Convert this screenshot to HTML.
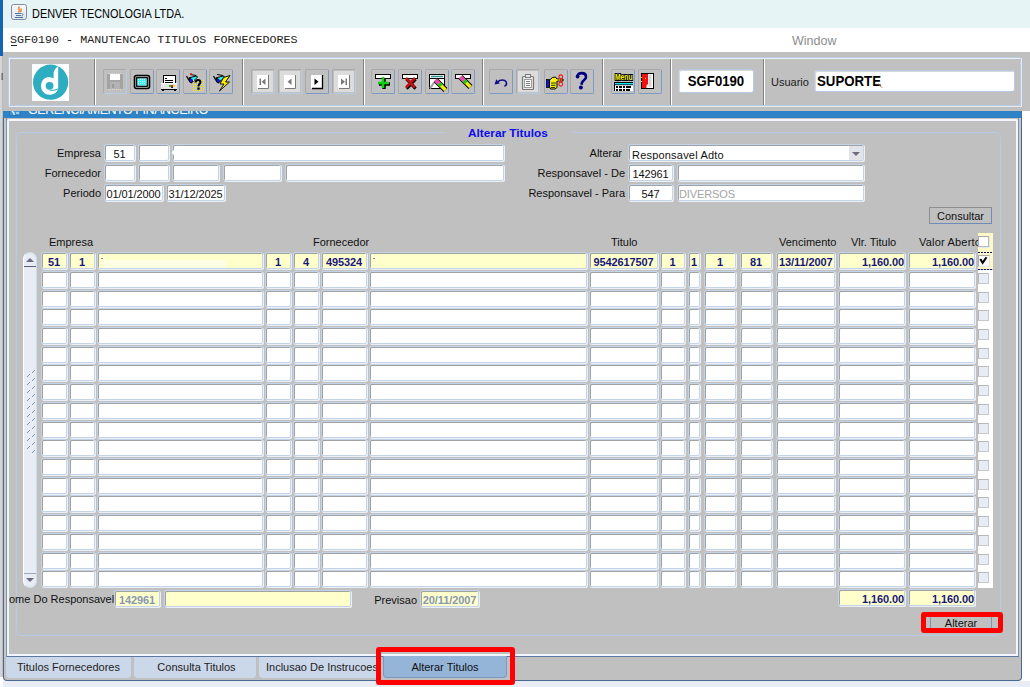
<!DOCTYPE html><html><head><meta charset="utf-8"><style>
*{margin:0;padding:0;box-sizing:border-box}
html,body{width:1030px;height:687px;overflow:hidden;background:#fff;font-family:"Liberation Sans",sans-serif}
body{position:relative}
.a{position:absolute}
.f{position:absolute;border:1px solid #c3d3e8;border-radius:2px;box-shadow:inset 1px 1px 0 #a2a2a2,1px 1px 0 #eceff5;overflow:hidden}
.f span{display:block;white-space:nowrap;overflow:hidden;letter-spacing:-0.1px}
.l{position:absolute;white-space:nowrap;line-height:13px;letter-spacing:0}
.tb{position:absolute;top:69px;width:24px;height:25px;border:1px solid #a9a9a9;border-right-color:#7d9bc2;border-bottom-color:#7d9bc2;border-radius:2px}
.tb.d{border-right-color:#b8cce6;border-bottom-color:#b8cce6}
.tb svg{position:absolute;left:-1px;top:-1px}
.sep{position:absolute;top:59px;width:2px;height:46px;border-left:1px solid #808080;border-right:1px solid #fff}
.tab{position:absolute;top:657px;height:21px;background:#cbd8ea;border-radius:0 0 4px 4px;font-size:11px;color:#222;text-align:center;line-height:20px;white-space:nowrap;overflow:hidden}
</style></head><body>

<div class="a" style="left:0;top:0;width:3px;height:56px;background:#1565b5"></div>
<div class="a" style="left:0;top:56px;width:2px;height:621px;background:#d4d4d4"></div>
<div class="a" style="left:2px;top:56px;width:1px;height:621px;background:#bcbcbc"></div>
<div class="a" style="left:3px;top:0;width:1027px;height:28px;background:#e6f4f6"></div>
<div class="a" style="left:1px;top:73px;width:1px;height:7px;background:#a0a0a0"></div><div class="a" style="left:2px;top:73px;width:1px;height:7px;background:#707070"></div>
<svg class="a" style="left:11px;top:4px" width="16" height="16" viewBox="0 0 16 16">
<defs><linearGradient id="jg" x1="0" y1="0" x2="0" y2="1"><stop offset="0" stop-color="#fafafa"/><stop offset="1" stop-color="#dde3ea"/></linearGradient></defs>
<rect x="0.5" y="0.5" width="15" height="15" rx="2" fill="url(#jg)" stroke="#7a8ea8"/>
<path d="M8.5 2.5c-2.5 2 1.5 3.5-1 6M10.5 4.5c-1.5 1 .5 2-1 3.5" stroke="#e8731c" stroke-width="1.3" fill="none"/>
<path d="M4 9.5h6M5 11.5h5M4 13.5h8M10.5 9.5c2 0 2 2 0 2.5" stroke="#4f77a4" stroke-width="1" fill="none"/>
</svg>
<div class="l" style="left:32px;top:6.5px;font-size:12.2px;line-height:14px;color:#000;letter-spacing:0;transform:scaleX(0.895);transform-origin:0 0">DENVER TECNOLOGIA LTDA.</div>
<div class="a" style="left:3px;top:28px;width:1027px;height:24px;background:#fff"></div>
<div class="l" style="left:10px;top:33px;font-family:'Liberation Mono',monospace;font-size:11.7px;line-height:14px;color:#222;letter-spacing:0">SGF0190 - MANUTENCAO TITULOS FORNECEDORES</div>
<div class="a" style="left:11px;top:45px;width:6px;height:1px;background:#222"></div>
<div class="l" style="left:792px;top:34px;font-size:12.5px;line-height:14px;color:#8c8c8c;letter-spacing:0">Window</div>
<div class="a" style="left:3px;top:52px;width:1027px;height:59px;background:#c0c0c0"></div>
<div class="a" style="left:8px;top:57px;width:1013px;height:49px;border:1px solid #b9cce4;box-shadow:inset 1px 1px 0 #eaf0f8, 1px 1px 0 #e4eaf2"></div>
<div class="a" style="left:32px;top:64px;width:37px;height:37px;background:#fff"></div>
<svg class="a" style="left:32px;top:64px" width="37" height="37" viewBox="0 0 37 37">
<circle cx="18.6" cy="18.2" r="17.6" fill="#2eadc2"/>
<path d="M26.2 2.2 C24 3.8 21.6 6 21.6 9.5 L21.6 14.6 C19.8 13.4 17.6 13 15.5 13.3 C11.5 14 9 17.8 9 22 C9 27 13 30.8 17.6 30.8 C21.6 30.8 25.2 28.5 26.2 24.8 Z" fill="#fff"/>
<circle cx="17.6" cy="21.8" r="3.9" fill="#2eadc2"/>
<path d="M17.6 25.7 C20 26.2 23 25.8 26.2 24.2 L26.2 25.2 C23 27 20 27.2 17.6 26.6 Z" fill="#2eadc2"/>
</svg>
<div class="sep" style="left:94px"></div>
<div class="sep" style="left:242px"></div>
<div class="sep" style="left:363px"></div>
<div class="sep" style="left:482px"></div>
<div class="sep" style="left:602px"></div>
<div class="sep" style="left:670px"></div>
<div class="sep" style="left:763px"></div>
<div class="tb d" style="left:103px"><svg width="24" height="25" viewBox="0 0 24 25"><path d="M4 5h15l1 1v14H4z" fill="#a4a4a4"/><rect x="7" y="5" width="10" height="6" fill="#fff"/><path d="M5 4.5h14" stroke="#d8d8d8" stroke-dasharray="1 1"/><rect x="7" y="13" width="10" height="7" fill="#b4b4b4"/><rect x="9" y="15" width="2" height="4" fill="#9a9a9a"/><path d="M5 20.5h14" stroke="#d8d8d8" stroke-dasharray="1 1"/></svg></div>
<div class="tb" style="left:130px"><svg width="24" height="25" viewBox="0 0 24 25"><rect x="4.5" y="6.5" width="15" height="13" rx="2" fill="#c0c0c0" stroke="#000" stroke-width="1.6"/><rect x="6.8" y="8.8" width="10.4" height="8.4" fill="#fff" stroke="#000" stroke-width="1.4"/><rect x="7.5" y="9.5" width="9" height="7" fill="#40f0f8"/><path d="M8 10.5h8M8 12.5h8M8 14.5h8" stroke="#d8f8f8" stroke-dasharray="1 1"/></svg></div>
<div class="tb" style="left:156px"><svg width="24" height="25" viewBox="0 0 24 25"><rect x="7.5" y="6.5" width="12" height="8" fill="#fff" stroke="#000"/><path d="M9 9.5h2M9 11.5h8M9 13.5h8" stroke="#000"/><rect x="5" y="14" width="16" height="6" fill="#e4e4e4"/><path d="M5 14.5h16" stroke="#fff"/><path d="M5 20.5h16" stroke="#000"/><rect x="13" y="16" width="2" height="2" fill="#18c818"/><rect x="15" y="16" width="2" height="2" fill="#e81818"/><rect x="17" y="16" width="2" height="2" fill="#f0f018"/><rect x="15" y="18" width="2" height="1" fill="#1818e8"/><path d="M6 21.5h2M18 21.5h2" stroke="#000"/></svg></div>
<div class="tb" style="left:183px"><svg width="24" height="25" viewBox="0 0 24 25"><path d="M3.5 7l2.5 4.5" stroke="#000" stroke-width="1.2"/><path d="M5.5 8.5L13.5 6.5L15 8L8.5 14.5L6 13z" fill="#000"/><path d="M7.5 9L13.2 7.4L14 8.2L10.5 11.5z" fill="#30f0f8"/><path d="M6.8 9.5L10.5 11.5L8.3 13.6L6.8 12.6z" fill="#1414f0"/><path d="M7 5.5l6 1" stroke="#000" stroke-width="1"/><circle cx="8" cy="5" r="1" fill="#f01818"/><rect x="10" y="11" width="1" height="1" fill="#f0f000"/><rect x="10" y="13" width="1" height="1" fill="#f0f000"/><rect x="10" y="15" width="1" height="1" fill="#f0f000"/><rect x="10" y="17" width="1" height="1" fill="#f0f000"/><rect x="10" y="19" width="1" height="1" fill="#f0f000"/><rect x="10" y="21" width="1" height="1" fill="#f0f000"/><rect x="12" y="11" width="1" height="1" fill="#f0f000"/><rect x="12" y="13" width="1" height="1" fill="#f0f000"/><rect x="12" y="15" width="1" height="1" fill="#f0f000"/><rect x="12" y="17" width="1" height="1" fill="#f0f000"/><rect x="12" y="19" width="1" height="1" fill="#f0f000"/><rect x="12" y="21" width="1" height="1" fill="#f0f000"/><rect x="14" y="11" width="1" height="1" fill="#f0f000"/><rect x="14" y="13" width="1" height="1" fill="#f0f000"/><rect x="14" y="15" width="1" height="1" fill="#f0f000"/><rect x="14" y="17" width="1" height="1" fill="#f0f000"/><rect x="14" y="19" width="1" height="1" fill="#f0f000"/><rect x="14" y="21" width="1" height="1" fill="#f0f000"/><rect x="16" y="11" width="1" height="1" fill="#f0f000"/><rect x="16" y="13" width="1" height="1" fill="#f0f000"/><rect x="16" y="15" width="1" height="1" fill="#f0f000"/><rect x="16" y="17" width="1" height="1" fill="#f0f000"/><rect x="16" y="19" width="1" height="1" fill="#f0f000"/><rect x="16" y="21" width="1" height="1" fill="#f0f000"/><rect x="18" y="11" width="1" height="1" fill="#f0f000"/><rect x="18" y="13" width="1" height="1" fill="#f0f000"/><rect x="18" y="15" width="1" height="1" fill="#f0f000"/><rect x="18" y="17" width="1" height="1" fill="#f0f000"/><rect x="18" y="19" width="1" height="1" fill="#f0f000"/><rect x="18" y="21" width="1" height="1" fill="#f0f000"/><rect x="20" y="11" width="1" height="1" fill="#f0f000"/><rect x="20" y="13" width="1" height="1" fill="#f0f000"/><rect x="20" y="15" width="1" height="1" fill="#f0f000"/><rect x="20" y="17" width="1" height="1" fill="#f0f000"/><rect x="20" y="19" width="1" height="1" fill="#f0f000"/><rect x="20" y="21" width="1" height="1" fill="#f0f000"/><path d="M12.6 13.6c0-2 1.2-2.6 2.4-2.6 1.4 0 2.4.9 2.4 2.2 0 1.6-1.9 2-1.9 3.6v.6" stroke="#000" stroke-width="2" fill="none"/><rect x="14.3" y="18.5" width="2.4" height="2.2" fill="#000"/></svg></div>
<div class="tb" style="left:209px"><svg width="24" height="25" viewBox="0 0 24 25"><g transform="translate(1,0)"><path d="M3.5 7l2.5 4.5" stroke="#000" stroke-width="1.2"/><path d="M5.5 8.5L13.5 6.5L15 8L8.5 14.5L6 13z" fill="#000"/><path d="M7.5 9L13.2 7.4L14 8.2L10.5 11.5z" fill="#30f0f8"/><path d="M6.8 9.5L10.5 11.5L8.3 13.6L6.8 12.6z" fill="#1414f0"/><path d="M7 5.5l6 1" stroke="#000" stroke-width="1"/></g><path d="M21 6.5l-6.5 2-3.5 6.5h4l-4.5 7 10-9h-4l4.5-6.5z" fill="#f8f000" stroke="#000" stroke-width="0.9" stroke-linejoin="round"/></svg></div>
<div class="tb d" style="left:251px"><div style="position:absolute;left:1px;top:1px;width:20px;height:21px;background:#dcdcdc"></div><svg width="24" height="25" viewBox="0 0 24 25"><rect x="6" y="6" width="11.5" height="13.5" fill="#fff"/><path d="M17.5 6v13.5H7" stroke="#7a7a7a" fill="none" stroke-width="1"/><rect x="8.5" y="9.5" width="1.5" height="6.5" fill="#7a7a7a"/><path d="M14.5 9.5v6.5l-4-3.25z" fill="#7a7a7a"/></svg></div>
<div class="tb d" style="left:278px"><div style="position:absolute;left:1px;top:1px;width:20px;height:21px;background:#dcdcdc"></div><svg width="24" height="25" viewBox="0 0 24 25"><rect x="6" y="6" width="11.5" height="13.5" fill="#fff"/><path d="M17.5 6v13.5H7" stroke="#7a7a7a" fill="none" stroke-width="1"/><path d="M13.5 9.5v6.5l-4-3.25z" fill="#7a7a7a"/></svg></div>
<div class="tb" style="left:305px"><svg width="24" height="25" viewBox="0 0 24 25"><rect x="6" y="6" width="11.5" height="13.5" fill="#fff"/><path d="M17.5 6v13.5H7" stroke="#000" fill="none" stroke-width="1.3"/><path d="M9.5 9.5v6.5l4-3.25z" fill="#000"/></svg></div>
<div class="tb d" style="left:332px"><div style="position:absolute;left:1px;top:1px;width:20px;height:21px;background:#dcdcdc"></div><svg width="24" height="25" viewBox="0 0 24 25"><rect x="6" y="6" width="11.5" height="13.5" fill="#fff"/><path d="M17.5 6v13.5H7" stroke="#7a7a7a" fill="none" stroke-width="1"/><path d="M9 9.5v6.5l4-3.25z" fill="#7a7a7a"/><rect x="13.5" y="9.5" width="1.5" height="6.5" fill="#7a7a7a"/></svg></div>
<div class="tb" style="left:371px"><svg width="24" height="25" viewBox="0 0 24 25"><rect x="4.5" y="5.5" width="15" height="4" fill="#fff" stroke="#000"/><path d="M13 9v11M8 15h11" stroke="#000" stroke-width="3.5"/><path d="M12 8v11M7 14h11" stroke="#10d010" stroke-width="2.6"/></svg></div>
<div class="tb" style="left:398px"><svg width="24" height="25" viewBox="0 0 24 25"><rect x="4.5" y="5.5" width="15" height="4" fill="#fff" stroke="#000"/><path d="M8 9.5l9 9.5M17 9.5l-9 9.5" stroke="#000" stroke-width="3" transform="translate(0.6,0.6)"/><path d="M8 9l9 9.5M17 9l-9 9.5" stroke="#c01010" stroke-width="2.6"/></svg></div>
<div class="tb" style="left:425px"><svg width="24" height="25" viewBox="0 0 24 25"><rect x="4.5" y="5.5" width="15" height="14" fill="#fff" stroke="#000"/><path d="M6 7.5h12" stroke="#2a9090" stroke-width="1.5"/><path d="M5 9.5h14" stroke="#000"/><path d="M5 19.5l4-6" stroke="#a0a0a0" stroke-width="2"/><g transform="translate(10.5,11)"><path d="M0 0l10 10" stroke="#000" stroke-width="5.5"/><path d="M0 0l10 10" stroke="#f0e818" stroke-width="3.6"/><path d="M0 0l3.5 3.5" stroke="#f040c0" stroke-width="3.6"/><path d="M3.5 3.5l2.2 2.2" stroke="#18c818" stroke-width="3.6"/></g></svg></div>
<div class="tb" style="left:451px"><svg width="24" height="25" viewBox="0 0 24 25"><rect x="4.5" y="5.5" width="15" height="4" fill="#fff" stroke="#000"/><g transform="translate(9.5,8)"><path d="M0 0l10 10" stroke="#000" stroke-width="5.5"/><path d="M0 0l10 10" stroke="#f0e818" stroke-width="3.6"/><path d="M0 0l3.5 3.5" stroke="#f040c0" stroke-width="3.6"/><path d="M3.5 3.5l2.2 2.2" stroke="#18c818" stroke-width="3.6"/></g></svg></div>
<div class="tb" style="left:489px"><svg width="24" height="25" viewBox="0 0 24 25"><path d="M8.5 13c2.5-2.5 7.5-2.8 8.8.2.7 1.8-.4 3.4-1.8 4" stroke="#10108a" stroke-width="1.5" fill="none"/><path d="M5.5 15.5l1.8-5.2 3.6 4.2z" fill="#10108a"/></svg></div>
<div class="tb d" style="left:516px"><div style="position:absolute;left:1px;top:1px;width:20px;height:21px;background:#dcdcdc"></div><svg width="24" height="25" viewBox="0 0 24 25"><rect x="6.5" y="7.5" width="11" height="13" rx="1" fill="#e8e8e8" stroke="#7a7a7a" stroke-width="1.2"/><rect x="9.5" y="5.5" width="5" height="3" fill="#e8e8e8" stroke="#7a7a7a"/><rect x="8.5" y="10.5" width="7" height="8" fill="#fff" stroke="#9a9a9a"/><path d="M10 12.5h4M10 14.5h4M10 16.5h4" stroke="#7a7a7a"/></svg></div>
<div class="tb" style="left:544px"><svg width="24" height="25" viewBox="0 0 24 25"><rect x="2.5" y="10.5" width="3" height="8" fill="#1010f0" stroke="#000" stroke-width="0.8"/><path d="M5.5 11l3-2.5 3-.5 1.5 2h6v2h-6v6.5l-2 1.5h-4.5l-1-2z" fill="#f4f020" stroke="#000" stroke-width="1"/><path d="M7 14h5M7 16.3h4.5M7 18.5h4" stroke="#000" stroke-width="0.8"/><path d="M13 11h6" stroke="#f4f020" stroke-width="0.8" stroke-dasharray="1 1"/><circle cx="16.8" cy="7.8" r="1.9" fill="none" stroke="#f01818" stroke-width="1.1"/><circle cx="16.8" cy="15.2" r="1.9" fill="none" stroke="#f01818" stroke-width="1.1"/><path d="M16.3 9.6l1.6 3.6M17.3 9.6l-1.6 3.6" stroke="#f01818" stroke-width="0.9"/></svg></div>
<div class="tb" style="left:570px"><svg width="24" height="25" viewBox="0 0 24 25"><path d="M7.2 7.5c.6-2.3 2.4-3.4 4.6-3.4 2.5 0 4.2 1.6 4.2 3.8 0 2.6-3.3 3.4-4.2 6.2l-.3 1.6" stroke="#000080" stroke-width="2.6" fill="none"/><circle cx="7.6" cy="7.6" r="1.9" fill="#000080"/><circle cx="10.9" cy="18.4" r="2" fill="#000080"/></svg></div>
<div class="tb" style="left:611px"><svg width="24" height="25" viewBox="0 0 24 25"><text x="4" y="11" font-family="Liberation Sans" font-weight="bold" font-size="9.5" fill="#f8f818" stroke="#000" stroke-width="2.2" paint-order="stroke" textLength="17.5" lengthAdjust="spacingAndGlyphs">Menu</text><rect x="3" y="13" width="19" height="9" fill="#000"/><rect x="4" y="14" width="18" height="1.4" fill="#18e8f0"/><rect x="4" y="16.2" width="18" height="5.8" fill="#fff"/><path d="M5 18h2M8 18h3M12 18h2M15 18h5M5 21h2M8 21h3M12 21h2M15 21h4" stroke="#000" stroke-width="2"/></svg></div>
<div class="tb" style="left:638px"><svg width="24" height="25" viewBox="0 0 24 25"><rect x="3.5" y="4.5" width="12" height="15" fill="#fff" stroke="#000"/><rect x="10.5" y="6" width="3" height="12" fill="#d8d8d8"/><path d="M4 5h6v10l-1.5 1.5V19H4z" fill="#f01010"/><rect x="7" y="9" width="1" height="1" fill="#f0f000"/><rect x="3" y="8" width="1" height="1" fill="#f0f000"/><rect x="3" y="12" width="1" height="1" fill="#f0f000"/></svg></div>
<div class="a" style="left:678px;top:69px;width:76px;height:24px;background:#fff;border:1px solid #b7c9e3;border-radius:3px;box-shadow:inset 1px 1px 0 #d8d8d8"></div>
<div class="l" style="left:678px;width:76px;text-align:center;top:73px;font-size:14px;line-height:16px;font-weight:bold;color:#000;letter-spacing:0;transform:scaleX(0.94)">SGF0190</div>
<div class="l" style="left:771px;top:76px;font-size:11px;color:#1a1a1a">Usuario</div>
<div class="a" style="left:814px;top:70px;width:201px;height:22px;background:#fff;border:1px solid #b7c9e3;border-radius:3px;box-shadow:inset 1px 1px 0 #d8d8d8"></div>
<div class="l" style="left:817px;top:73px;font-size:14px;line-height:16px;font-weight:bold;color:#000;letter-spacing:0;transform:scaleX(0.945);transform-origin:0 0">SUPORTE</div>
<svg class="a" style="left:878px;top:83px" width="5" height="5"><path d="M0.5 0.5q1 3 4 4" stroke="#c87040" stroke-width="0.8" fill="none"/></svg>
<div class="a" style="left:3px;top:111px;width:1019px;height:570px;background:#c0c0c0;border:1px solid #4a6894;border-top:none;border-radius:0 0 4px 4px"></div>
<div class="a" style="left:3px;top:111px;width:1018px;height:7px;background:#2e82c6;overflow:hidden"><div style="position:absolute;left:6px;top:-6px;width:12px;height:11px;background:#3a96d8;border:1px solid #2a78b8"></div><svg style="position:absolute;left:8px;top:0" width="9" height="4"><path d="M1 0l2 2v2M5 2h3" stroke="#fff" stroke-width="1.2" fill="none"/></svg><div style="position:absolute;left:25px;top:-7px;font-size:12.5px;line-height:13px;color:#fff;white-space:nowrap;letter-spacing:-0.45px">GERENCIAMENTO FINANCEIRO</div></div>
<div class="a" style="left:4px;top:118px;width:2px;height:539px;background:#cbc8c4"></div><div class="a" style="left:1019px;top:118px;width:2px;height:539px;background:#cbc8c4"></div>
<div class="a" style="left:6px;top:118px;width:1013px;height:539px;background:#c0c0c0;border-left:1px solid #7894b4;border-right:1px solid #7894b4;border-bottom:1px solid #5a78a0"></div>
<div class="a" style="left:7px;top:119px;width:1011px;height:537px;border-left:2px solid #f2f5fb;border-top:2px solid #f2f5fb;border-right:2px solid #f2f5fb;border-bottom:2px solid #f2f5fb;border-radius:2px 2px 0 0"></div>
<div class="a" style="left:16px;top:132px;width:985px;height:504px;border:1px solid #b7cbe6;border-radius:5px"></div>
<div class="a" style="left:445px;top:128px;width:128px;height:8px;background:#c0c0c0"></div>
<div class="l" style="left:468px;top:127px;font-size:11.8px;font-weight:bold;color:#0c0cf0;letter-spacing:0">Alterar Titulos</div>
<div class="l" style="right:929px;top:147px;font-size:11px;color:#111;font-weight:normal;">Empresa</div>
<div class="l" style="right:929px;top:167px;font-size:11px;color:#111;font-weight:normal;">Fornecedor</div>
<div class="l" style="right:929px;top:187px;font-size:11px;color:#111;font-weight:normal;">Periodo</div>
<div class="f" style="left:104px;top:144px;width:31px;height:17px;background:#fff;"><span style="text-align:center;color:#111;font-weight:normal;font-size:11px;padding:1px 2px 0;line-height:16px;">51</span></div>
<div class="f" style="left:138px;top:144px;width:31px;height:17px;background:#fff;"><span style="text-align:center;color:#111;font-weight:normal;font-size:11px;padding:1px 2px 0;line-height:16px;"></span></div>
<div class="f" style="left:172px;top:144px;width:332px;height:17px;background:#fff;"><span style="text-align:center;color:#111;font-weight:normal;font-size:11px;padding:1px 2px 0;line-height:16px;"></span></div>
<svg class="a" style="left:171px;top:144px" width="7" height="17"><path d="M6 1.5L0.8 8.5L6 15.5Z" fill="#fff"/></svg>
<div class="f" style="left:104px;top:164px;width:31px;height:17px;background:#fff;"><span style="text-align:center;color:#111;font-weight:normal;font-size:11px;padding:1px 2px 0;line-height:16px;"></span></div>
<div class="f" style="left:138px;top:164px;width:31px;height:17px;background:#fff;"><span style="text-align:center;color:#111;font-weight:normal;font-size:11px;padding:1px 2px 0;line-height:16px;"></span></div>
<div class="f" style="left:172px;top:164px;width:47px;height:17px;background:#fff;"><span style="text-align:center;color:#111;font-weight:normal;font-size:11px;padding:1px 2px 0;line-height:16px;"></span></div>
<div class="f" style="left:223px;top:164px;width:58px;height:17px;background:#fff;"><span style="text-align:center;color:#111;font-weight:normal;font-size:11px;padding:1px 2px 0;line-height:16px;"></span></div>
<div class="f" style="left:285px;top:164px;width:219px;height:17px;background:#fff;"><span style="text-align:center;color:#111;font-weight:normal;font-size:11px;padding:1px 2px 0;line-height:16px;"></span></div>
<div class="f" style="left:104px;top:184px;width:59px;height:17px;background:#fff;"><span style="text-align:center;color:#111;font-weight:normal;font-size:11px;padding:1px 1px 0;line-height:16px;">01/01/2000</span></div>
<div class="f" style="left:166px;top:184px;width:59px;height:17px;background:#fff;"><span style="text-align:center;color:#111;font-weight:normal;font-size:11px;padding:1px 1px 0;line-height:16px;">31/12/2025</span></div>
<div class="l" style="right:408px;top:147px;font-size:11px;color:#111;font-weight:normal;">Alterar</div>
<div class="l" style="right:405px;top:167px;font-size:11px;color:#111;font-weight:normal;">Responsavel - De</div>
<div class="l" style="right:405px;top:187px;font-size:11px;color:#111;font-weight:normal;">Responsavel - Para</div>
<div class="f" style="left:628px;top:144px;width:236px;height:17px;background:#fff"><span style="font-size:11px;line-height:16px;padding:2px 0 0 3px;color:#111;letter-spacing:0.2px">Responsavel Adto</span><div style="position:absolute;right:0;top:1px;width:14px;height:14px;background:#e2e4ea"></div><div style="position:absolute;right:3px;top:7px;width:0;height:0;border-left:4px solid transparent;border-right:4px solid transparent;border-top:4px solid #6c6c7c"></div></div>
<div class="f" style="left:628px;top:164px;width:45px;height:17px;background:#fff;"><span style="text-align:center;color:#111;font-weight:normal;font-size:11px;padding:1px 1px 0;line-height:16px;">142961</span></div>
<div class="f" style="left:677px;top:164px;width:187px;height:17px;background:#fff;"><span style="text-align:center;color:#111;font-weight:normal;font-size:11px;padding:1px 2px 0;line-height:16px;"></span></div>
<div class="f" style="left:628px;top:184px;width:45px;height:17px;background:#fff;"><span style="text-align:center;color:#111;font-weight:normal;font-size:11px;padding:1px 2px 0;line-height:16px;">547</span></div>
<div class="f" style="left:677px;top:184px;width:187px;height:17px;background:#fff;"><span style="text-align:left;color:#a4a4a4;font-weight:normal;font-size:11px;padding:1px 1px 0;line-height:16px;">DIVERSOS</span></div>
<div class="a" style="left:929px;top:207px;width:63px;height:17px;border:1px solid #8e8e8e;border-right-color:#6d8cb8;border-bottom-color:#6d8cb8;border-radius:1px"></div>
<div class="l" style="left:929px;width:63px;text-align:center;top:210px;font-size:11px;color:#111;letter-spacing:0">Consultar</div>
<div class="l" style="left:49px;top:236px;font-size:11px;color:#111;font-weight:normal;">Empresa</div>
<div class="l" style="left:313px;top:236px;font-size:11px;color:#111;font-weight:normal;">Fornecedor</div>
<div class="l" style="left:611px;top:236px;font-size:11px;color:#111;font-weight:normal;">Titulo</div>
<div class="l" style="left:779px;top:236px;font-size:11px;color:#111;font-weight:normal;">Vencimento</div>
<div class="l" style="left:851px;top:236px;font-size:11px;color:#111;font-weight:normal;">Vlr. Titulo</div>
<div class="l" style="left:919px;top:236px;font-size:11px;color:#111;font-weight:normal;letter-spacing:0.2px">Valor Aberto</div>
<div class="f" style="left:41px;top:252px;width:26px;height:17px;background:#ffffcc;"><span style="text-align:center;color:#17177a;font-weight:bold;font-size:11px;padding:1px 2px 0;line-height:16px;">51</span></div>
<div class="f" style="left:69px;top:252px;width:26px;height:17px;background:#ffffcc;"><span style="text-align:center;color:#17177a;font-weight:bold;font-size:11px;padding:1px 2px 0;line-height:16px;">1</span></div>
<div class="f" style="left:97px;top:252px;width:166px;height:17px;background:#ffffcc;"><span style="text-align:left;color:#17177a;font-weight:bold;font-size:11px;padding:1px 2px 0;line-height:16px;"></span></div>
<div class="f" style="left:265px;top:252px;width:26px;height:17px;background:#ffffcc;"><span style="text-align:center;color:#17177a;font-weight:bold;font-size:11px;padding:1px 2px 0;line-height:16px;">1</span></div>
<div class="f" style="left:293px;top:252px;width:26px;height:17px;background:#ffffcc;"><span style="text-align:center;color:#17177a;font-weight:bold;font-size:11px;padding:1px 2px 0;line-height:16px;">4</span></div>
<div class="f" style="left:321px;top:252px;width:46px;height:17px;background:#ffffcc;"><span style="text-align:center;color:#17177a;font-weight:bold;font-size:11px;padding:1px 2px 0;line-height:16px;">495324</span></div>
<div class="f" style="left:369px;top:252px;width:218px;height:17px;background:#ffffcc;"><span style="text-align:left;color:#17177a;font-weight:bold;font-size:11px;padding:1px 2px 0;line-height:16px;"></span></div>
<div class="f" style="left:589px;top:252px;width:69px;height:17px;background:#ffffcc;"><span style="text-align:center;color:#17177a;font-weight:bold;font-size:11px;padding:1px 2px 0;line-height:16px;">9542617507</span></div>
<div class="f" style="left:660px;top:252px;width:25px;height:17px;background:#ffffcc;"><span style="text-align:center;color:#17177a;font-weight:bold;font-size:11px;padding:1px 2px 0;line-height:16px;">1</span></div>
<div class="f" style="left:688px;top:252px;width:12px;height:17px;background:#ffffcc;"><span style="text-align:center;color:#17177a;font-weight:bold;font-size:11px;padding:1px 2px 0;line-height:16px;">1</span></div>
<div class="f" style="left:704px;top:252px;width:32px;height:17px;background:#ffffcc;"><span style="text-align:center;color:#17177a;font-weight:bold;font-size:11px;padding:1px 2px 0;line-height:16px;">1</span></div>
<div class="f" style="left:740px;top:252px;width:32px;height:17px;background:#ffffcc;"><span style="text-align:center;color:#17177a;font-weight:bold;font-size:11px;padding:1px 2px 0;line-height:16px;">81</span></div>
<div class="f" style="left:776px;top:252px;width:59px;height:17px;background:#ffffcc;"><span style="text-align:center;color:#17177a;font-weight:bold;font-size:11px;padding:1px 2px 0;line-height:16px;">13/11/2007</span></div>
<div class="f" style="left:838px;top:252px;width:67px;height:17px;background:#ffffcc;"><span style="text-align:right;color:#17177a;font-weight:bold;font-size:11px;padding:1px 0px 0;line-height:16px;">1,160.00</span></div>
<div class="f" style="left:908px;top:252px;width:67px;height:17px;background:#ffffcc;"><span style="text-align:right;color:#17177a;font-weight:bold;font-size:11px;padding:1px 0px 0;line-height:16px;">1,160.00</span></div>
<div class="f" style="left:41px;top:271px;width:26px;height:17px;background:#fff;"><span style="text-align:center;color:#111;font-weight:normal;font-size:11px;padding:1px 2px 0;line-height:16px;"></span></div>
<div class="f" style="left:69px;top:271px;width:26px;height:17px;background:#fff;"><span style="text-align:center;color:#111;font-weight:normal;font-size:11px;padding:1px 2px 0;line-height:16px;"></span></div>
<div class="f" style="left:97px;top:271px;width:166px;height:17px;background:#fff;"><span style="text-align:center;color:#111;font-weight:normal;font-size:11px;padding:1px 2px 0;line-height:16px;"></span></div>
<div class="f" style="left:265px;top:271px;width:26px;height:17px;background:#fff;"><span style="text-align:center;color:#111;font-weight:normal;font-size:11px;padding:1px 2px 0;line-height:16px;"></span></div>
<div class="f" style="left:293px;top:271px;width:26px;height:17px;background:#fff;"><span style="text-align:center;color:#111;font-weight:normal;font-size:11px;padding:1px 2px 0;line-height:16px;"></span></div>
<div class="f" style="left:321px;top:271px;width:46px;height:17px;background:#fff;"><span style="text-align:center;color:#111;font-weight:normal;font-size:11px;padding:1px 2px 0;line-height:16px;"></span></div>
<div class="f" style="left:369px;top:271px;width:218px;height:17px;background:#fff;"><span style="text-align:center;color:#111;font-weight:normal;font-size:11px;padding:1px 2px 0;line-height:16px;"></span></div>
<div class="f" style="left:589px;top:271px;width:69px;height:17px;background:#fff;"><span style="text-align:center;color:#111;font-weight:normal;font-size:11px;padding:1px 2px 0;line-height:16px;"></span></div>
<div class="f" style="left:660px;top:271px;width:25px;height:17px;background:#fff;"><span style="text-align:center;color:#111;font-weight:normal;font-size:11px;padding:1px 2px 0;line-height:16px;"></span></div>
<div class="f" style="left:688px;top:271px;width:12px;height:17px;background:#fff;"><span style="text-align:center;color:#111;font-weight:normal;font-size:11px;padding:1px 2px 0;line-height:16px;"></span></div>
<div class="f" style="left:704px;top:271px;width:32px;height:17px;background:#fff;"><span style="text-align:center;color:#111;font-weight:normal;font-size:11px;padding:1px 2px 0;line-height:16px;"></span></div>
<div class="f" style="left:740px;top:271px;width:32px;height:17px;background:#fff;"><span style="text-align:center;color:#111;font-weight:normal;font-size:11px;padding:1px 2px 0;line-height:16px;"></span></div>
<div class="f" style="left:776px;top:271px;width:59px;height:17px;background:#fff;"><span style="text-align:center;color:#111;font-weight:normal;font-size:11px;padding:1px 2px 0;line-height:16px;"></span></div>
<div class="f" style="left:838px;top:271px;width:67px;height:17px;background:#fff;"><span style="text-align:center;color:#111;font-weight:normal;font-size:11px;padding:1px 2px 0;line-height:16px;"></span></div>
<div class="f" style="left:908px;top:271px;width:67px;height:17px;background:#fff;"><span style="text-align:center;color:#111;font-weight:normal;font-size:11px;padding:1px 2px 0;line-height:16px;"></span></div>
<div class="f" style="left:41px;top:290px;width:26px;height:17px;background:#fff;"><span style="text-align:center;color:#111;font-weight:normal;font-size:11px;padding:1px 2px 0;line-height:16px;"></span></div>
<div class="f" style="left:69px;top:290px;width:26px;height:17px;background:#fff;"><span style="text-align:center;color:#111;font-weight:normal;font-size:11px;padding:1px 2px 0;line-height:16px;"></span></div>
<div class="f" style="left:97px;top:290px;width:166px;height:17px;background:#fff;"><span style="text-align:center;color:#111;font-weight:normal;font-size:11px;padding:1px 2px 0;line-height:16px;"></span></div>
<div class="f" style="left:265px;top:290px;width:26px;height:17px;background:#fff;"><span style="text-align:center;color:#111;font-weight:normal;font-size:11px;padding:1px 2px 0;line-height:16px;"></span></div>
<div class="f" style="left:293px;top:290px;width:26px;height:17px;background:#fff;"><span style="text-align:center;color:#111;font-weight:normal;font-size:11px;padding:1px 2px 0;line-height:16px;"></span></div>
<div class="f" style="left:321px;top:290px;width:46px;height:17px;background:#fff;"><span style="text-align:center;color:#111;font-weight:normal;font-size:11px;padding:1px 2px 0;line-height:16px;"></span></div>
<div class="f" style="left:369px;top:290px;width:218px;height:17px;background:#fff;"><span style="text-align:center;color:#111;font-weight:normal;font-size:11px;padding:1px 2px 0;line-height:16px;"></span></div>
<div class="f" style="left:589px;top:290px;width:69px;height:17px;background:#fff;"><span style="text-align:center;color:#111;font-weight:normal;font-size:11px;padding:1px 2px 0;line-height:16px;"></span></div>
<div class="f" style="left:660px;top:290px;width:25px;height:17px;background:#fff;"><span style="text-align:center;color:#111;font-weight:normal;font-size:11px;padding:1px 2px 0;line-height:16px;"></span></div>
<div class="f" style="left:688px;top:290px;width:12px;height:17px;background:#fff;"><span style="text-align:center;color:#111;font-weight:normal;font-size:11px;padding:1px 2px 0;line-height:16px;"></span></div>
<div class="f" style="left:704px;top:290px;width:32px;height:17px;background:#fff;"><span style="text-align:center;color:#111;font-weight:normal;font-size:11px;padding:1px 2px 0;line-height:16px;"></span></div>
<div class="f" style="left:740px;top:290px;width:32px;height:17px;background:#fff;"><span style="text-align:center;color:#111;font-weight:normal;font-size:11px;padding:1px 2px 0;line-height:16px;"></span></div>
<div class="f" style="left:776px;top:290px;width:59px;height:17px;background:#fff;"><span style="text-align:center;color:#111;font-weight:normal;font-size:11px;padding:1px 2px 0;line-height:16px;"></span></div>
<div class="f" style="left:838px;top:290px;width:67px;height:17px;background:#fff;"><span style="text-align:center;color:#111;font-weight:normal;font-size:11px;padding:1px 2px 0;line-height:16px;"></span></div>
<div class="f" style="left:908px;top:290px;width:67px;height:17px;background:#fff;"><span style="text-align:center;color:#111;font-weight:normal;font-size:11px;padding:1px 2px 0;line-height:16px;"></span></div>
<div class="f" style="left:41px;top:308px;width:26px;height:17px;background:#fff;"><span style="text-align:center;color:#111;font-weight:normal;font-size:11px;padding:1px 2px 0;line-height:16px;"></span></div>
<div class="f" style="left:69px;top:308px;width:26px;height:17px;background:#fff;"><span style="text-align:center;color:#111;font-weight:normal;font-size:11px;padding:1px 2px 0;line-height:16px;"></span></div>
<div class="f" style="left:97px;top:308px;width:166px;height:17px;background:#fff;"><span style="text-align:center;color:#111;font-weight:normal;font-size:11px;padding:1px 2px 0;line-height:16px;"></span></div>
<div class="f" style="left:265px;top:308px;width:26px;height:17px;background:#fff;"><span style="text-align:center;color:#111;font-weight:normal;font-size:11px;padding:1px 2px 0;line-height:16px;"></span></div>
<div class="f" style="left:293px;top:308px;width:26px;height:17px;background:#fff;"><span style="text-align:center;color:#111;font-weight:normal;font-size:11px;padding:1px 2px 0;line-height:16px;"></span></div>
<div class="f" style="left:321px;top:308px;width:46px;height:17px;background:#fff;"><span style="text-align:center;color:#111;font-weight:normal;font-size:11px;padding:1px 2px 0;line-height:16px;"></span></div>
<div class="f" style="left:369px;top:308px;width:218px;height:17px;background:#fff;"><span style="text-align:center;color:#111;font-weight:normal;font-size:11px;padding:1px 2px 0;line-height:16px;"></span></div>
<div class="f" style="left:589px;top:308px;width:69px;height:17px;background:#fff;"><span style="text-align:center;color:#111;font-weight:normal;font-size:11px;padding:1px 2px 0;line-height:16px;"></span></div>
<div class="f" style="left:660px;top:308px;width:25px;height:17px;background:#fff;"><span style="text-align:center;color:#111;font-weight:normal;font-size:11px;padding:1px 2px 0;line-height:16px;"></span></div>
<div class="f" style="left:688px;top:308px;width:12px;height:17px;background:#fff;"><span style="text-align:center;color:#111;font-weight:normal;font-size:11px;padding:1px 2px 0;line-height:16px;"></span></div>
<div class="f" style="left:704px;top:308px;width:32px;height:17px;background:#fff;"><span style="text-align:center;color:#111;font-weight:normal;font-size:11px;padding:1px 2px 0;line-height:16px;"></span></div>
<div class="f" style="left:740px;top:308px;width:32px;height:17px;background:#fff;"><span style="text-align:center;color:#111;font-weight:normal;font-size:11px;padding:1px 2px 0;line-height:16px;"></span></div>
<div class="f" style="left:776px;top:308px;width:59px;height:17px;background:#fff;"><span style="text-align:center;color:#111;font-weight:normal;font-size:11px;padding:1px 2px 0;line-height:16px;"></span></div>
<div class="f" style="left:838px;top:308px;width:67px;height:17px;background:#fff;"><span style="text-align:center;color:#111;font-weight:normal;font-size:11px;padding:1px 2px 0;line-height:16px;"></span></div>
<div class="f" style="left:908px;top:308px;width:67px;height:17px;background:#fff;"><span style="text-align:center;color:#111;font-weight:normal;font-size:11px;padding:1px 2px 0;line-height:16px;"></span></div>
<div class="f" style="left:41px;top:327px;width:26px;height:17px;background:#fff;"><span style="text-align:center;color:#111;font-weight:normal;font-size:11px;padding:1px 2px 0;line-height:16px;"></span></div>
<div class="f" style="left:69px;top:327px;width:26px;height:17px;background:#fff;"><span style="text-align:center;color:#111;font-weight:normal;font-size:11px;padding:1px 2px 0;line-height:16px;"></span></div>
<div class="f" style="left:97px;top:327px;width:166px;height:17px;background:#fff;"><span style="text-align:center;color:#111;font-weight:normal;font-size:11px;padding:1px 2px 0;line-height:16px;"></span></div>
<div class="f" style="left:265px;top:327px;width:26px;height:17px;background:#fff;"><span style="text-align:center;color:#111;font-weight:normal;font-size:11px;padding:1px 2px 0;line-height:16px;"></span></div>
<div class="f" style="left:293px;top:327px;width:26px;height:17px;background:#fff;"><span style="text-align:center;color:#111;font-weight:normal;font-size:11px;padding:1px 2px 0;line-height:16px;"></span></div>
<div class="f" style="left:321px;top:327px;width:46px;height:17px;background:#fff;"><span style="text-align:center;color:#111;font-weight:normal;font-size:11px;padding:1px 2px 0;line-height:16px;"></span></div>
<div class="f" style="left:369px;top:327px;width:218px;height:17px;background:#fff;"><span style="text-align:center;color:#111;font-weight:normal;font-size:11px;padding:1px 2px 0;line-height:16px;"></span></div>
<div class="f" style="left:589px;top:327px;width:69px;height:17px;background:#fff;"><span style="text-align:center;color:#111;font-weight:normal;font-size:11px;padding:1px 2px 0;line-height:16px;"></span></div>
<div class="f" style="left:660px;top:327px;width:25px;height:17px;background:#fff;"><span style="text-align:center;color:#111;font-weight:normal;font-size:11px;padding:1px 2px 0;line-height:16px;"></span></div>
<div class="f" style="left:688px;top:327px;width:12px;height:17px;background:#fff;"><span style="text-align:center;color:#111;font-weight:normal;font-size:11px;padding:1px 2px 0;line-height:16px;"></span></div>
<div class="f" style="left:704px;top:327px;width:32px;height:17px;background:#fff;"><span style="text-align:center;color:#111;font-weight:normal;font-size:11px;padding:1px 2px 0;line-height:16px;"></span></div>
<div class="f" style="left:740px;top:327px;width:32px;height:17px;background:#fff;"><span style="text-align:center;color:#111;font-weight:normal;font-size:11px;padding:1px 2px 0;line-height:16px;"></span></div>
<div class="f" style="left:776px;top:327px;width:59px;height:17px;background:#fff;"><span style="text-align:center;color:#111;font-weight:normal;font-size:11px;padding:1px 2px 0;line-height:16px;"></span></div>
<div class="f" style="left:838px;top:327px;width:67px;height:17px;background:#fff;"><span style="text-align:center;color:#111;font-weight:normal;font-size:11px;padding:1px 2px 0;line-height:16px;"></span></div>
<div class="f" style="left:908px;top:327px;width:67px;height:17px;background:#fff;"><span style="text-align:center;color:#111;font-weight:normal;font-size:11px;padding:1px 2px 0;line-height:16px;"></span></div>
<div class="f" style="left:41px;top:346px;width:26px;height:17px;background:#fff;"><span style="text-align:center;color:#111;font-weight:normal;font-size:11px;padding:1px 2px 0;line-height:16px;"></span></div>
<div class="f" style="left:69px;top:346px;width:26px;height:17px;background:#fff;"><span style="text-align:center;color:#111;font-weight:normal;font-size:11px;padding:1px 2px 0;line-height:16px;"></span></div>
<div class="f" style="left:97px;top:346px;width:166px;height:17px;background:#fff;"><span style="text-align:center;color:#111;font-weight:normal;font-size:11px;padding:1px 2px 0;line-height:16px;"></span></div>
<div class="f" style="left:265px;top:346px;width:26px;height:17px;background:#fff;"><span style="text-align:center;color:#111;font-weight:normal;font-size:11px;padding:1px 2px 0;line-height:16px;"></span></div>
<div class="f" style="left:293px;top:346px;width:26px;height:17px;background:#fff;"><span style="text-align:center;color:#111;font-weight:normal;font-size:11px;padding:1px 2px 0;line-height:16px;"></span></div>
<div class="f" style="left:321px;top:346px;width:46px;height:17px;background:#fff;"><span style="text-align:center;color:#111;font-weight:normal;font-size:11px;padding:1px 2px 0;line-height:16px;"></span></div>
<div class="f" style="left:369px;top:346px;width:218px;height:17px;background:#fff;"><span style="text-align:center;color:#111;font-weight:normal;font-size:11px;padding:1px 2px 0;line-height:16px;"></span></div>
<div class="f" style="left:589px;top:346px;width:69px;height:17px;background:#fff;"><span style="text-align:center;color:#111;font-weight:normal;font-size:11px;padding:1px 2px 0;line-height:16px;"></span></div>
<div class="f" style="left:660px;top:346px;width:25px;height:17px;background:#fff;"><span style="text-align:center;color:#111;font-weight:normal;font-size:11px;padding:1px 2px 0;line-height:16px;"></span></div>
<div class="f" style="left:688px;top:346px;width:12px;height:17px;background:#fff;"><span style="text-align:center;color:#111;font-weight:normal;font-size:11px;padding:1px 2px 0;line-height:16px;"></span></div>
<div class="f" style="left:704px;top:346px;width:32px;height:17px;background:#fff;"><span style="text-align:center;color:#111;font-weight:normal;font-size:11px;padding:1px 2px 0;line-height:16px;"></span></div>
<div class="f" style="left:740px;top:346px;width:32px;height:17px;background:#fff;"><span style="text-align:center;color:#111;font-weight:normal;font-size:11px;padding:1px 2px 0;line-height:16px;"></span></div>
<div class="f" style="left:776px;top:346px;width:59px;height:17px;background:#fff;"><span style="text-align:center;color:#111;font-weight:normal;font-size:11px;padding:1px 2px 0;line-height:16px;"></span></div>
<div class="f" style="left:838px;top:346px;width:67px;height:17px;background:#fff;"><span style="text-align:center;color:#111;font-weight:normal;font-size:11px;padding:1px 2px 0;line-height:16px;"></span></div>
<div class="f" style="left:908px;top:346px;width:67px;height:17px;background:#fff;"><span style="text-align:center;color:#111;font-weight:normal;font-size:11px;padding:1px 2px 0;line-height:16px;"></span></div>
<div class="f" style="left:41px;top:364px;width:26px;height:17px;background:#fff;"><span style="text-align:center;color:#111;font-weight:normal;font-size:11px;padding:1px 2px 0;line-height:16px;"></span></div>
<div class="f" style="left:69px;top:364px;width:26px;height:17px;background:#fff;"><span style="text-align:center;color:#111;font-weight:normal;font-size:11px;padding:1px 2px 0;line-height:16px;"></span></div>
<div class="f" style="left:97px;top:364px;width:166px;height:17px;background:#fff;"><span style="text-align:center;color:#111;font-weight:normal;font-size:11px;padding:1px 2px 0;line-height:16px;"></span></div>
<div class="f" style="left:265px;top:364px;width:26px;height:17px;background:#fff;"><span style="text-align:center;color:#111;font-weight:normal;font-size:11px;padding:1px 2px 0;line-height:16px;"></span></div>
<div class="f" style="left:293px;top:364px;width:26px;height:17px;background:#fff;"><span style="text-align:center;color:#111;font-weight:normal;font-size:11px;padding:1px 2px 0;line-height:16px;"></span></div>
<div class="f" style="left:321px;top:364px;width:46px;height:17px;background:#fff;"><span style="text-align:center;color:#111;font-weight:normal;font-size:11px;padding:1px 2px 0;line-height:16px;"></span></div>
<div class="f" style="left:369px;top:364px;width:218px;height:17px;background:#fff;"><span style="text-align:center;color:#111;font-weight:normal;font-size:11px;padding:1px 2px 0;line-height:16px;"></span></div>
<div class="f" style="left:589px;top:364px;width:69px;height:17px;background:#fff;"><span style="text-align:center;color:#111;font-weight:normal;font-size:11px;padding:1px 2px 0;line-height:16px;"></span></div>
<div class="f" style="left:660px;top:364px;width:25px;height:17px;background:#fff;"><span style="text-align:center;color:#111;font-weight:normal;font-size:11px;padding:1px 2px 0;line-height:16px;"></span></div>
<div class="f" style="left:688px;top:364px;width:12px;height:17px;background:#fff;"><span style="text-align:center;color:#111;font-weight:normal;font-size:11px;padding:1px 2px 0;line-height:16px;"></span></div>
<div class="f" style="left:704px;top:364px;width:32px;height:17px;background:#fff;"><span style="text-align:center;color:#111;font-weight:normal;font-size:11px;padding:1px 2px 0;line-height:16px;"></span></div>
<div class="f" style="left:740px;top:364px;width:32px;height:17px;background:#fff;"><span style="text-align:center;color:#111;font-weight:normal;font-size:11px;padding:1px 2px 0;line-height:16px;"></span></div>
<div class="f" style="left:776px;top:364px;width:59px;height:17px;background:#fff;"><span style="text-align:center;color:#111;font-weight:normal;font-size:11px;padding:1px 2px 0;line-height:16px;"></span></div>
<div class="f" style="left:838px;top:364px;width:67px;height:17px;background:#fff;"><span style="text-align:center;color:#111;font-weight:normal;font-size:11px;padding:1px 2px 0;line-height:16px;"></span></div>
<div class="f" style="left:908px;top:364px;width:67px;height:17px;background:#fff;"><span style="text-align:center;color:#111;font-weight:normal;font-size:11px;padding:1px 2px 0;line-height:16px;"></span></div>
<div class="f" style="left:41px;top:383px;width:26px;height:17px;background:#fff;"><span style="text-align:center;color:#111;font-weight:normal;font-size:11px;padding:1px 2px 0;line-height:16px;"></span></div>
<div class="f" style="left:69px;top:383px;width:26px;height:17px;background:#fff;"><span style="text-align:center;color:#111;font-weight:normal;font-size:11px;padding:1px 2px 0;line-height:16px;"></span></div>
<div class="f" style="left:97px;top:383px;width:166px;height:17px;background:#fff;"><span style="text-align:center;color:#111;font-weight:normal;font-size:11px;padding:1px 2px 0;line-height:16px;"></span></div>
<div class="f" style="left:265px;top:383px;width:26px;height:17px;background:#fff;"><span style="text-align:center;color:#111;font-weight:normal;font-size:11px;padding:1px 2px 0;line-height:16px;"></span></div>
<div class="f" style="left:293px;top:383px;width:26px;height:17px;background:#fff;"><span style="text-align:center;color:#111;font-weight:normal;font-size:11px;padding:1px 2px 0;line-height:16px;"></span></div>
<div class="f" style="left:321px;top:383px;width:46px;height:17px;background:#fff;"><span style="text-align:center;color:#111;font-weight:normal;font-size:11px;padding:1px 2px 0;line-height:16px;"></span></div>
<div class="f" style="left:369px;top:383px;width:218px;height:17px;background:#fff;"><span style="text-align:center;color:#111;font-weight:normal;font-size:11px;padding:1px 2px 0;line-height:16px;"></span></div>
<div class="f" style="left:589px;top:383px;width:69px;height:17px;background:#fff;"><span style="text-align:center;color:#111;font-weight:normal;font-size:11px;padding:1px 2px 0;line-height:16px;"></span></div>
<div class="f" style="left:660px;top:383px;width:25px;height:17px;background:#fff;"><span style="text-align:center;color:#111;font-weight:normal;font-size:11px;padding:1px 2px 0;line-height:16px;"></span></div>
<div class="f" style="left:688px;top:383px;width:12px;height:17px;background:#fff;"><span style="text-align:center;color:#111;font-weight:normal;font-size:11px;padding:1px 2px 0;line-height:16px;"></span></div>
<div class="f" style="left:704px;top:383px;width:32px;height:17px;background:#fff;"><span style="text-align:center;color:#111;font-weight:normal;font-size:11px;padding:1px 2px 0;line-height:16px;"></span></div>
<div class="f" style="left:740px;top:383px;width:32px;height:17px;background:#fff;"><span style="text-align:center;color:#111;font-weight:normal;font-size:11px;padding:1px 2px 0;line-height:16px;"></span></div>
<div class="f" style="left:776px;top:383px;width:59px;height:17px;background:#fff;"><span style="text-align:center;color:#111;font-weight:normal;font-size:11px;padding:1px 2px 0;line-height:16px;"></span></div>
<div class="f" style="left:838px;top:383px;width:67px;height:17px;background:#fff;"><span style="text-align:center;color:#111;font-weight:normal;font-size:11px;padding:1px 2px 0;line-height:16px;"></span></div>
<div class="f" style="left:908px;top:383px;width:67px;height:17px;background:#fff;"><span style="text-align:center;color:#111;font-weight:normal;font-size:11px;padding:1px 2px 0;line-height:16px;"></span></div>
<div class="f" style="left:41px;top:402px;width:26px;height:17px;background:#fff;"><span style="text-align:center;color:#111;font-weight:normal;font-size:11px;padding:1px 2px 0;line-height:16px;"></span></div>
<div class="f" style="left:69px;top:402px;width:26px;height:17px;background:#fff;"><span style="text-align:center;color:#111;font-weight:normal;font-size:11px;padding:1px 2px 0;line-height:16px;"></span></div>
<div class="f" style="left:97px;top:402px;width:166px;height:17px;background:#fff;"><span style="text-align:center;color:#111;font-weight:normal;font-size:11px;padding:1px 2px 0;line-height:16px;"></span></div>
<div class="f" style="left:265px;top:402px;width:26px;height:17px;background:#fff;"><span style="text-align:center;color:#111;font-weight:normal;font-size:11px;padding:1px 2px 0;line-height:16px;"></span></div>
<div class="f" style="left:293px;top:402px;width:26px;height:17px;background:#fff;"><span style="text-align:center;color:#111;font-weight:normal;font-size:11px;padding:1px 2px 0;line-height:16px;"></span></div>
<div class="f" style="left:321px;top:402px;width:46px;height:17px;background:#fff;"><span style="text-align:center;color:#111;font-weight:normal;font-size:11px;padding:1px 2px 0;line-height:16px;"></span></div>
<div class="f" style="left:369px;top:402px;width:218px;height:17px;background:#fff;"><span style="text-align:center;color:#111;font-weight:normal;font-size:11px;padding:1px 2px 0;line-height:16px;"></span></div>
<div class="f" style="left:589px;top:402px;width:69px;height:17px;background:#fff;"><span style="text-align:center;color:#111;font-weight:normal;font-size:11px;padding:1px 2px 0;line-height:16px;"></span></div>
<div class="f" style="left:660px;top:402px;width:25px;height:17px;background:#fff;"><span style="text-align:center;color:#111;font-weight:normal;font-size:11px;padding:1px 2px 0;line-height:16px;"></span></div>
<div class="f" style="left:688px;top:402px;width:12px;height:17px;background:#fff;"><span style="text-align:center;color:#111;font-weight:normal;font-size:11px;padding:1px 2px 0;line-height:16px;"></span></div>
<div class="f" style="left:704px;top:402px;width:32px;height:17px;background:#fff;"><span style="text-align:center;color:#111;font-weight:normal;font-size:11px;padding:1px 2px 0;line-height:16px;"></span></div>
<div class="f" style="left:740px;top:402px;width:32px;height:17px;background:#fff;"><span style="text-align:center;color:#111;font-weight:normal;font-size:11px;padding:1px 2px 0;line-height:16px;"></span></div>
<div class="f" style="left:776px;top:402px;width:59px;height:17px;background:#fff;"><span style="text-align:center;color:#111;font-weight:normal;font-size:11px;padding:1px 2px 0;line-height:16px;"></span></div>
<div class="f" style="left:838px;top:402px;width:67px;height:17px;background:#fff;"><span style="text-align:center;color:#111;font-weight:normal;font-size:11px;padding:1px 2px 0;line-height:16px;"></span></div>
<div class="f" style="left:908px;top:402px;width:67px;height:17px;background:#fff;"><span style="text-align:center;color:#111;font-weight:normal;font-size:11px;padding:1px 2px 0;line-height:16px;"></span></div>
<div class="f" style="left:41px;top:421px;width:26px;height:17px;background:#fff;"><span style="text-align:center;color:#111;font-weight:normal;font-size:11px;padding:1px 2px 0;line-height:16px;"></span></div>
<div class="f" style="left:69px;top:421px;width:26px;height:17px;background:#fff;"><span style="text-align:center;color:#111;font-weight:normal;font-size:11px;padding:1px 2px 0;line-height:16px;"></span></div>
<div class="f" style="left:97px;top:421px;width:166px;height:17px;background:#fff;"><span style="text-align:center;color:#111;font-weight:normal;font-size:11px;padding:1px 2px 0;line-height:16px;"></span></div>
<div class="f" style="left:265px;top:421px;width:26px;height:17px;background:#fff;"><span style="text-align:center;color:#111;font-weight:normal;font-size:11px;padding:1px 2px 0;line-height:16px;"></span></div>
<div class="f" style="left:293px;top:421px;width:26px;height:17px;background:#fff;"><span style="text-align:center;color:#111;font-weight:normal;font-size:11px;padding:1px 2px 0;line-height:16px;"></span></div>
<div class="f" style="left:321px;top:421px;width:46px;height:17px;background:#fff;"><span style="text-align:center;color:#111;font-weight:normal;font-size:11px;padding:1px 2px 0;line-height:16px;"></span></div>
<div class="f" style="left:369px;top:421px;width:218px;height:17px;background:#fff;"><span style="text-align:center;color:#111;font-weight:normal;font-size:11px;padding:1px 2px 0;line-height:16px;"></span></div>
<div class="f" style="left:589px;top:421px;width:69px;height:17px;background:#fff;"><span style="text-align:center;color:#111;font-weight:normal;font-size:11px;padding:1px 2px 0;line-height:16px;"></span></div>
<div class="f" style="left:660px;top:421px;width:25px;height:17px;background:#fff;"><span style="text-align:center;color:#111;font-weight:normal;font-size:11px;padding:1px 2px 0;line-height:16px;"></span></div>
<div class="f" style="left:688px;top:421px;width:12px;height:17px;background:#fff;"><span style="text-align:center;color:#111;font-weight:normal;font-size:11px;padding:1px 2px 0;line-height:16px;"></span></div>
<div class="f" style="left:704px;top:421px;width:32px;height:17px;background:#fff;"><span style="text-align:center;color:#111;font-weight:normal;font-size:11px;padding:1px 2px 0;line-height:16px;"></span></div>
<div class="f" style="left:740px;top:421px;width:32px;height:17px;background:#fff;"><span style="text-align:center;color:#111;font-weight:normal;font-size:11px;padding:1px 2px 0;line-height:16px;"></span></div>
<div class="f" style="left:776px;top:421px;width:59px;height:17px;background:#fff;"><span style="text-align:center;color:#111;font-weight:normal;font-size:11px;padding:1px 2px 0;line-height:16px;"></span></div>
<div class="f" style="left:838px;top:421px;width:67px;height:17px;background:#fff;"><span style="text-align:center;color:#111;font-weight:normal;font-size:11px;padding:1px 2px 0;line-height:16px;"></span></div>
<div class="f" style="left:908px;top:421px;width:67px;height:17px;background:#fff;"><span style="text-align:center;color:#111;font-weight:normal;font-size:11px;padding:1px 2px 0;line-height:16px;"></span></div>
<div class="f" style="left:41px;top:439px;width:26px;height:17px;background:#fff;"><span style="text-align:center;color:#111;font-weight:normal;font-size:11px;padding:1px 2px 0;line-height:16px;"></span></div>
<div class="f" style="left:69px;top:439px;width:26px;height:17px;background:#fff;"><span style="text-align:center;color:#111;font-weight:normal;font-size:11px;padding:1px 2px 0;line-height:16px;"></span></div>
<div class="f" style="left:97px;top:439px;width:166px;height:17px;background:#fff;"><span style="text-align:center;color:#111;font-weight:normal;font-size:11px;padding:1px 2px 0;line-height:16px;"></span></div>
<div class="f" style="left:265px;top:439px;width:26px;height:17px;background:#fff;"><span style="text-align:center;color:#111;font-weight:normal;font-size:11px;padding:1px 2px 0;line-height:16px;"></span></div>
<div class="f" style="left:293px;top:439px;width:26px;height:17px;background:#fff;"><span style="text-align:center;color:#111;font-weight:normal;font-size:11px;padding:1px 2px 0;line-height:16px;"></span></div>
<div class="f" style="left:321px;top:439px;width:46px;height:17px;background:#fff;"><span style="text-align:center;color:#111;font-weight:normal;font-size:11px;padding:1px 2px 0;line-height:16px;"></span></div>
<div class="f" style="left:369px;top:439px;width:218px;height:17px;background:#fff;"><span style="text-align:center;color:#111;font-weight:normal;font-size:11px;padding:1px 2px 0;line-height:16px;"></span></div>
<div class="f" style="left:589px;top:439px;width:69px;height:17px;background:#fff;"><span style="text-align:center;color:#111;font-weight:normal;font-size:11px;padding:1px 2px 0;line-height:16px;"></span></div>
<div class="f" style="left:660px;top:439px;width:25px;height:17px;background:#fff;"><span style="text-align:center;color:#111;font-weight:normal;font-size:11px;padding:1px 2px 0;line-height:16px;"></span></div>
<div class="f" style="left:688px;top:439px;width:12px;height:17px;background:#fff;"><span style="text-align:center;color:#111;font-weight:normal;font-size:11px;padding:1px 2px 0;line-height:16px;"></span></div>
<div class="f" style="left:704px;top:439px;width:32px;height:17px;background:#fff;"><span style="text-align:center;color:#111;font-weight:normal;font-size:11px;padding:1px 2px 0;line-height:16px;"></span></div>
<div class="f" style="left:740px;top:439px;width:32px;height:17px;background:#fff;"><span style="text-align:center;color:#111;font-weight:normal;font-size:11px;padding:1px 2px 0;line-height:16px;"></span></div>
<div class="f" style="left:776px;top:439px;width:59px;height:17px;background:#fff;"><span style="text-align:center;color:#111;font-weight:normal;font-size:11px;padding:1px 2px 0;line-height:16px;"></span></div>
<div class="f" style="left:838px;top:439px;width:67px;height:17px;background:#fff;"><span style="text-align:center;color:#111;font-weight:normal;font-size:11px;padding:1px 2px 0;line-height:16px;"></span></div>
<div class="f" style="left:908px;top:439px;width:67px;height:17px;background:#fff;"><span style="text-align:center;color:#111;font-weight:normal;font-size:11px;padding:1px 2px 0;line-height:16px;"></span></div>
<div class="f" style="left:41px;top:458px;width:26px;height:17px;background:#fff;"><span style="text-align:center;color:#111;font-weight:normal;font-size:11px;padding:1px 2px 0;line-height:16px;"></span></div>
<div class="f" style="left:69px;top:458px;width:26px;height:17px;background:#fff;"><span style="text-align:center;color:#111;font-weight:normal;font-size:11px;padding:1px 2px 0;line-height:16px;"></span></div>
<div class="f" style="left:97px;top:458px;width:166px;height:17px;background:#fff;"><span style="text-align:center;color:#111;font-weight:normal;font-size:11px;padding:1px 2px 0;line-height:16px;"></span></div>
<div class="f" style="left:265px;top:458px;width:26px;height:17px;background:#fff;"><span style="text-align:center;color:#111;font-weight:normal;font-size:11px;padding:1px 2px 0;line-height:16px;"></span></div>
<div class="f" style="left:293px;top:458px;width:26px;height:17px;background:#fff;"><span style="text-align:center;color:#111;font-weight:normal;font-size:11px;padding:1px 2px 0;line-height:16px;"></span></div>
<div class="f" style="left:321px;top:458px;width:46px;height:17px;background:#fff;"><span style="text-align:center;color:#111;font-weight:normal;font-size:11px;padding:1px 2px 0;line-height:16px;"></span></div>
<div class="f" style="left:369px;top:458px;width:218px;height:17px;background:#fff;"><span style="text-align:center;color:#111;font-weight:normal;font-size:11px;padding:1px 2px 0;line-height:16px;"></span></div>
<div class="f" style="left:589px;top:458px;width:69px;height:17px;background:#fff;"><span style="text-align:center;color:#111;font-weight:normal;font-size:11px;padding:1px 2px 0;line-height:16px;"></span></div>
<div class="f" style="left:660px;top:458px;width:25px;height:17px;background:#fff;"><span style="text-align:center;color:#111;font-weight:normal;font-size:11px;padding:1px 2px 0;line-height:16px;"></span></div>
<div class="f" style="left:688px;top:458px;width:12px;height:17px;background:#fff;"><span style="text-align:center;color:#111;font-weight:normal;font-size:11px;padding:1px 2px 0;line-height:16px;"></span></div>
<div class="f" style="left:704px;top:458px;width:32px;height:17px;background:#fff;"><span style="text-align:center;color:#111;font-weight:normal;font-size:11px;padding:1px 2px 0;line-height:16px;"></span></div>
<div class="f" style="left:740px;top:458px;width:32px;height:17px;background:#fff;"><span style="text-align:center;color:#111;font-weight:normal;font-size:11px;padding:1px 2px 0;line-height:16px;"></span></div>
<div class="f" style="left:776px;top:458px;width:59px;height:17px;background:#fff;"><span style="text-align:center;color:#111;font-weight:normal;font-size:11px;padding:1px 2px 0;line-height:16px;"></span></div>
<div class="f" style="left:838px;top:458px;width:67px;height:17px;background:#fff;"><span style="text-align:center;color:#111;font-weight:normal;font-size:11px;padding:1px 2px 0;line-height:16px;"></span></div>
<div class="f" style="left:908px;top:458px;width:67px;height:17px;background:#fff;"><span style="text-align:center;color:#111;font-weight:normal;font-size:11px;padding:1px 2px 0;line-height:16px;"></span></div>
<div class="f" style="left:41px;top:477px;width:26px;height:17px;background:#fff;"><span style="text-align:center;color:#111;font-weight:normal;font-size:11px;padding:1px 2px 0;line-height:16px;"></span></div>
<div class="f" style="left:69px;top:477px;width:26px;height:17px;background:#fff;"><span style="text-align:center;color:#111;font-weight:normal;font-size:11px;padding:1px 2px 0;line-height:16px;"></span></div>
<div class="f" style="left:97px;top:477px;width:166px;height:17px;background:#fff;"><span style="text-align:center;color:#111;font-weight:normal;font-size:11px;padding:1px 2px 0;line-height:16px;"></span></div>
<div class="f" style="left:265px;top:477px;width:26px;height:17px;background:#fff;"><span style="text-align:center;color:#111;font-weight:normal;font-size:11px;padding:1px 2px 0;line-height:16px;"></span></div>
<div class="f" style="left:293px;top:477px;width:26px;height:17px;background:#fff;"><span style="text-align:center;color:#111;font-weight:normal;font-size:11px;padding:1px 2px 0;line-height:16px;"></span></div>
<div class="f" style="left:321px;top:477px;width:46px;height:17px;background:#fff;"><span style="text-align:center;color:#111;font-weight:normal;font-size:11px;padding:1px 2px 0;line-height:16px;"></span></div>
<div class="f" style="left:369px;top:477px;width:218px;height:17px;background:#fff;"><span style="text-align:center;color:#111;font-weight:normal;font-size:11px;padding:1px 2px 0;line-height:16px;"></span></div>
<div class="f" style="left:589px;top:477px;width:69px;height:17px;background:#fff;"><span style="text-align:center;color:#111;font-weight:normal;font-size:11px;padding:1px 2px 0;line-height:16px;"></span></div>
<div class="f" style="left:660px;top:477px;width:25px;height:17px;background:#fff;"><span style="text-align:center;color:#111;font-weight:normal;font-size:11px;padding:1px 2px 0;line-height:16px;"></span></div>
<div class="f" style="left:688px;top:477px;width:12px;height:17px;background:#fff;"><span style="text-align:center;color:#111;font-weight:normal;font-size:11px;padding:1px 2px 0;line-height:16px;"></span></div>
<div class="f" style="left:704px;top:477px;width:32px;height:17px;background:#fff;"><span style="text-align:center;color:#111;font-weight:normal;font-size:11px;padding:1px 2px 0;line-height:16px;"></span></div>
<div class="f" style="left:740px;top:477px;width:32px;height:17px;background:#fff;"><span style="text-align:center;color:#111;font-weight:normal;font-size:11px;padding:1px 2px 0;line-height:16px;"></span></div>
<div class="f" style="left:776px;top:477px;width:59px;height:17px;background:#fff;"><span style="text-align:center;color:#111;font-weight:normal;font-size:11px;padding:1px 2px 0;line-height:16px;"></span></div>
<div class="f" style="left:838px;top:477px;width:67px;height:17px;background:#fff;"><span style="text-align:center;color:#111;font-weight:normal;font-size:11px;padding:1px 2px 0;line-height:16px;"></span></div>
<div class="f" style="left:908px;top:477px;width:67px;height:17px;background:#fff;"><span style="text-align:center;color:#111;font-weight:normal;font-size:11px;padding:1px 2px 0;line-height:16px;"></span></div>
<div class="f" style="left:41px;top:495px;width:26px;height:17px;background:#fff;"><span style="text-align:center;color:#111;font-weight:normal;font-size:11px;padding:1px 2px 0;line-height:16px;"></span></div>
<div class="f" style="left:69px;top:495px;width:26px;height:17px;background:#fff;"><span style="text-align:center;color:#111;font-weight:normal;font-size:11px;padding:1px 2px 0;line-height:16px;"></span></div>
<div class="f" style="left:97px;top:495px;width:166px;height:17px;background:#fff;"><span style="text-align:center;color:#111;font-weight:normal;font-size:11px;padding:1px 2px 0;line-height:16px;"></span></div>
<div class="f" style="left:265px;top:495px;width:26px;height:17px;background:#fff;"><span style="text-align:center;color:#111;font-weight:normal;font-size:11px;padding:1px 2px 0;line-height:16px;"></span></div>
<div class="f" style="left:293px;top:495px;width:26px;height:17px;background:#fff;"><span style="text-align:center;color:#111;font-weight:normal;font-size:11px;padding:1px 2px 0;line-height:16px;"></span></div>
<div class="f" style="left:321px;top:495px;width:46px;height:17px;background:#fff;"><span style="text-align:center;color:#111;font-weight:normal;font-size:11px;padding:1px 2px 0;line-height:16px;"></span></div>
<div class="f" style="left:369px;top:495px;width:218px;height:17px;background:#fff;"><span style="text-align:center;color:#111;font-weight:normal;font-size:11px;padding:1px 2px 0;line-height:16px;"></span></div>
<div class="f" style="left:589px;top:495px;width:69px;height:17px;background:#fff;"><span style="text-align:center;color:#111;font-weight:normal;font-size:11px;padding:1px 2px 0;line-height:16px;"></span></div>
<div class="f" style="left:660px;top:495px;width:25px;height:17px;background:#fff;"><span style="text-align:center;color:#111;font-weight:normal;font-size:11px;padding:1px 2px 0;line-height:16px;"></span></div>
<div class="f" style="left:688px;top:495px;width:12px;height:17px;background:#fff;"><span style="text-align:center;color:#111;font-weight:normal;font-size:11px;padding:1px 2px 0;line-height:16px;"></span></div>
<div class="f" style="left:704px;top:495px;width:32px;height:17px;background:#fff;"><span style="text-align:center;color:#111;font-weight:normal;font-size:11px;padding:1px 2px 0;line-height:16px;"></span></div>
<div class="f" style="left:740px;top:495px;width:32px;height:17px;background:#fff;"><span style="text-align:center;color:#111;font-weight:normal;font-size:11px;padding:1px 2px 0;line-height:16px;"></span></div>
<div class="f" style="left:776px;top:495px;width:59px;height:17px;background:#fff;"><span style="text-align:center;color:#111;font-weight:normal;font-size:11px;padding:1px 2px 0;line-height:16px;"></span></div>
<div class="f" style="left:838px;top:495px;width:67px;height:17px;background:#fff;"><span style="text-align:center;color:#111;font-weight:normal;font-size:11px;padding:1px 2px 0;line-height:16px;"></span></div>
<div class="f" style="left:908px;top:495px;width:67px;height:17px;background:#fff;"><span style="text-align:center;color:#111;font-weight:normal;font-size:11px;padding:1px 2px 0;line-height:16px;"></span></div>
<div class="f" style="left:41px;top:514px;width:26px;height:17px;background:#fff;"><span style="text-align:center;color:#111;font-weight:normal;font-size:11px;padding:1px 2px 0;line-height:16px;"></span></div>
<div class="f" style="left:69px;top:514px;width:26px;height:17px;background:#fff;"><span style="text-align:center;color:#111;font-weight:normal;font-size:11px;padding:1px 2px 0;line-height:16px;"></span></div>
<div class="f" style="left:97px;top:514px;width:166px;height:17px;background:#fff;"><span style="text-align:center;color:#111;font-weight:normal;font-size:11px;padding:1px 2px 0;line-height:16px;"></span></div>
<div class="f" style="left:265px;top:514px;width:26px;height:17px;background:#fff;"><span style="text-align:center;color:#111;font-weight:normal;font-size:11px;padding:1px 2px 0;line-height:16px;"></span></div>
<div class="f" style="left:293px;top:514px;width:26px;height:17px;background:#fff;"><span style="text-align:center;color:#111;font-weight:normal;font-size:11px;padding:1px 2px 0;line-height:16px;"></span></div>
<div class="f" style="left:321px;top:514px;width:46px;height:17px;background:#fff;"><span style="text-align:center;color:#111;font-weight:normal;font-size:11px;padding:1px 2px 0;line-height:16px;"></span></div>
<div class="f" style="left:369px;top:514px;width:218px;height:17px;background:#fff;"><span style="text-align:center;color:#111;font-weight:normal;font-size:11px;padding:1px 2px 0;line-height:16px;"></span></div>
<div class="f" style="left:589px;top:514px;width:69px;height:17px;background:#fff;"><span style="text-align:center;color:#111;font-weight:normal;font-size:11px;padding:1px 2px 0;line-height:16px;"></span></div>
<div class="f" style="left:660px;top:514px;width:25px;height:17px;background:#fff;"><span style="text-align:center;color:#111;font-weight:normal;font-size:11px;padding:1px 2px 0;line-height:16px;"></span></div>
<div class="f" style="left:688px;top:514px;width:12px;height:17px;background:#fff;"><span style="text-align:center;color:#111;font-weight:normal;font-size:11px;padding:1px 2px 0;line-height:16px;"></span></div>
<div class="f" style="left:704px;top:514px;width:32px;height:17px;background:#fff;"><span style="text-align:center;color:#111;font-weight:normal;font-size:11px;padding:1px 2px 0;line-height:16px;"></span></div>
<div class="f" style="left:740px;top:514px;width:32px;height:17px;background:#fff;"><span style="text-align:center;color:#111;font-weight:normal;font-size:11px;padding:1px 2px 0;line-height:16px;"></span></div>
<div class="f" style="left:776px;top:514px;width:59px;height:17px;background:#fff;"><span style="text-align:center;color:#111;font-weight:normal;font-size:11px;padding:1px 2px 0;line-height:16px;"></span></div>
<div class="f" style="left:838px;top:514px;width:67px;height:17px;background:#fff;"><span style="text-align:center;color:#111;font-weight:normal;font-size:11px;padding:1px 2px 0;line-height:16px;"></span></div>
<div class="f" style="left:908px;top:514px;width:67px;height:17px;background:#fff;"><span style="text-align:center;color:#111;font-weight:normal;font-size:11px;padding:1px 2px 0;line-height:16px;"></span></div>
<div class="f" style="left:41px;top:533px;width:26px;height:17px;background:#fff;"><span style="text-align:center;color:#111;font-weight:normal;font-size:11px;padding:1px 2px 0;line-height:16px;"></span></div>
<div class="f" style="left:69px;top:533px;width:26px;height:17px;background:#fff;"><span style="text-align:center;color:#111;font-weight:normal;font-size:11px;padding:1px 2px 0;line-height:16px;"></span></div>
<div class="f" style="left:97px;top:533px;width:166px;height:17px;background:#fff;"><span style="text-align:center;color:#111;font-weight:normal;font-size:11px;padding:1px 2px 0;line-height:16px;"></span></div>
<div class="f" style="left:265px;top:533px;width:26px;height:17px;background:#fff;"><span style="text-align:center;color:#111;font-weight:normal;font-size:11px;padding:1px 2px 0;line-height:16px;"></span></div>
<div class="f" style="left:293px;top:533px;width:26px;height:17px;background:#fff;"><span style="text-align:center;color:#111;font-weight:normal;font-size:11px;padding:1px 2px 0;line-height:16px;"></span></div>
<div class="f" style="left:321px;top:533px;width:46px;height:17px;background:#fff;"><span style="text-align:center;color:#111;font-weight:normal;font-size:11px;padding:1px 2px 0;line-height:16px;"></span></div>
<div class="f" style="left:369px;top:533px;width:218px;height:17px;background:#fff;"><span style="text-align:center;color:#111;font-weight:normal;font-size:11px;padding:1px 2px 0;line-height:16px;"></span></div>
<div class="f" style="left:589px;top:533px;width:69px;height:17px;background:#fff;"><span style="text-align:center;color:#111;font-weight:normal;font-size:11px;padding:1px 2px 0;line-height:16px;"></span></div>
<div class="f" style="left:660px;top:533px;width:25px;height:17px;background:#fff;"><span style="text-align:center;color:#111;font-weight:normal;font-size:11px;padding:1px 2px 0;line-height:16px;"></span></div>
<div class="f" style="left:688px;top:533px;width:12px;height:17px;background:#fff;"><span style="text-align:center;color:#111;font-weight:normal;font-size:11px;padding:1px 2px 0;line-height:16px;"></span></div>
<div class="f" style="left:704px;top:533px;width:32px;height:17px;background:#fff;"><span style="text-align:center;color:#111;font-weight:normal;font-size:11px;padding:1px 2px 0;line-height:16px;"></span></div>
<div class="f" style="left:740px;top:533px;width:32px;height:17px;background:#fff;"><span style="text-align:center;color:#111;font-weight:normal;font-size:11px;padding:1px 2px 0;line-height:16px;"></span></div>
<div class="f" style="left:776px;top:533px;width:59px;height:17px;background:#fff;"><span style="text-align:center;color:#111;font-weight:normal;font-size:11px;padding:1px 2px 0;line-height:16px;"></span></div>
<div class="f" style="left:838px;top:533px;width:67px;height:17px;background:#fff;"><span style="text-align:center;color:#111;font-weight:normal;font-size:11px;padding:1px 2px 0;line-height:16px;"></span></div>
<div class="f" style="left:908px;top:533px;width:67px;height:17px;background:#fff;"><span style="text-align:center;color:#111;font-weight:normal;font-size:11px;padding:1px 2px 0;line-height:16px;"></span></div>
<div class="f" style="left:41px;top:552px;width:26px;height:17px;background:#fff;"><span style="text-align:center;color:#111;font-weight:normal;font-size:11px;padding:1px 2px 0;line-height:16px;"></span></div>
<div class="f" style="left:69px;top:552px;width:26px;height:17px;background:#fff;"><span style="text-align:center;color:#111;font-weight:normal;font-size:11px;padding:1px 2px 0;line-height:16px;"></span></div>
<div class="f" style="left:97px;top:552px;width:166px;height:17px;background:#fff;"><span style="text-align:center;color:#111;font-weight:normal;font-size:11px;padding:1px 2px 0;line-height:16px;"></span></div>
<div class="f" style="left:265px;top:552px;width:26px;height:17px;background:#fff;"><span style="text-align:center;color:#111;font-weight:normal;font-size:11px;padding:1px 2px 0;line-height:16px;"></span></div>
<div class="f" style="left:293px;top:552px;width:26px;height:17px;background:#fff;"><span style="text-align:center;color:#111;font-weight:normal;font-size:11px;padding:1px 2px 0;line-height:16px;"></span></div>
<div class="f" style="left:321px;top:552px;width:46px;height:17px;background:#fff;"><span style="text-align:center;color:#111;font-weight:normal;font-size:11px;padding:1px 2px 0;line-height:16px;"></span></div>
<div class="f" style="left:369px;top:552px;width:218px;height:17px;background:#fff;"><span style="text-align:center;color:#111;font-weight:normal;font-size:11px;padding:1px 2px 0;line-height:16px;"></span></div>
<div class="f" style="left:589px;top:552px;width:69px;height:17px;background:#fff;"><span style="text-align:center;color:#111;font-weight:normal;font-size:11px;padding:1px 2px 0;line-height:16px;"></span></div>
<div class="f" style="left:660px;top:552px;width:25px;height:17px;background:#fff;"><span style="text-align:center;color:#111;font-weight:normal;font-size:11px;padding:1px 2px 0;line-height:16px;"></span></div>
<div class="f" style="left:688px;top:552px;width:12px;height:17px;background:#fff;"><span style="text-align:center;color:#111;font-weight:normal;font-size:11px;padding:1px 2px 0;line-height:16px;"></span></div>
<div class="f" style="left:704px;top:552px;width:32px;height:17px;background:#fff;"><span style="text-align:center;color:#111;font-weight:normal;font-size:11px;padding:1px 2px 0;line-height:16px;"></span></div>
<div class="f" style="left:740px;top:552px;width:32px;height:17px;background:#fff;"><span style="text-align:center;color:#111;font-weight:normal;font-size:11px;padding:1px 2px 0;line-height:16px;"></span></div>
<div class="f" style="left:776px;top:552px;width:59px;height:17px;background:#fff;"><span style="text-align:center;color:#111;font-weight:normal;font-size:11px;padding:1px 2px 0;line-height:16px;"></span></div>
<div class="f" style="left:838px;top:552px;width:67px;height:17px;background:#fff;"><span style="text-align:center;color:#111;font-weight:normal;font-size:11px;padding:1px 2px 0;line-height:16px;"></span></div>
<div class="f" style="left:908px;top:552px;width:67px;height:17px;background:#fff;"><span style="text-align:center;color:#111;font-weight:normal;font-size:11px;padding:1px 2px 0;line-height:16px;"></span></div>
<div class="f" style="left:41px;top:570px;width:26px;height:17px;background:#fff;"><span style="text-align:center;color:#111;font-weight:normal;font-size:11px;padding:1px 2px 0;line-height:16px;"></span></div>
<div class="f" style="left:69px;top:570px;width:26px;height:17px;background:#fff;"><span style="text-align:center;color:#111;font-weight:normal;font-size:11px;padding:1px 2px 0;line-height:16px;"></span></div>
<div class="f" style="left:97px;top:570px;width:166px;height:17px;background:#fff;"><span style="text-align:center;color:#111;font-weight:normal;font-size:11px;padding:1px 2px 0;line-height:16px;"></span></div>
<div class="f" style="left:265px;top:570px;width:26px;height:17px;background:#fff;"><span style="text-align:center;color:#111;font-weight:normal;font-size:11px;padding:1px 2px 0;line-height:16px;"></span></div>
<div class="f" style="left:293px;top:570px;width:26px;height:17px;background:#fff;"><span style="text-align:center;color:#111;font-weight:normal;font-size:11px;padding:1px 2px 0;line-height:16px;"></span></div>
<div class="f" style="left:321px;top:570px;width:46px;height:17px;background:#fff;"><span style="text-align:center;color:#111;font-weight:normal;font-size:11px;padding:1px 2px 0;line-height:16px;"></span></div>
<div class="f" style="left:369px;top:570px;width:218px;height:17px;background:#fff;"><span style="text-align:center;color:#111;font-weight:normal;font-size:11px;padding:1px 2px 0;line-height:16px;"></span></div>
<div class="f" style="left:589px;top:570px;width:69px;height:17px;background:#fff;"><span style="text-align:center;color:#111;font-weight:normal;font-size:11px;padding:1px 2px 0;line-height:16px;"></span></div>
<div class="f" style="left:660px;top:570px;width:25px;height:17px;background:#fff;"><span style="text-align:center;color:#111;font-weight:normal;font-size:11px;padding:1px 2px 0;line-height:16px;"></span></div>
<div class="f" style="left:688px;top:570px;width:12px;height:17px;background:#fff;"><span style="text-align:center;color:#111;font-weight:normal;font-size:11px;padding:1px 2px 0;line-height:16px;"></span></div>
<div class="f" style="left:704px;top:570px;width:32px;height:17px;background:#fff;"><span style="text-align:center;color:#111;font-weight:normal;font-size:11px;padding:1px 2px 0;line-height:16px;"></span></div>
<div class="f" style="left:740px;top:570px;width:32px;height:17px;background:#fff;"><span style="text-align:center;color:#111;font-weight:normal;font-size:11px;padding:1px 2px 0;line-height:16px;"></span></div>
<div class="f" style="left:776px;top:570px;width:59px;height:17px;background:#fff;"><span style="text-align:center;color:#111;font-weight:normal;font-size:11px;padding:1px 2px 0;line-height:16px;"></span></div>
<div class="f" style="left:838px;top:570px;width:67px;height:17px;background:#fff;"><span style="text-align:center;color:#111;font-weight:normal;font-size:11px;padding:1px 2px 0;line-height:16px;"></span></div>
<div class="f" style="left:908px;top:570px;width:67px;height:17px;background:#fff;"><span style="text-align:center;color:#111;font-weight:normal;font-size:11px;padding:1px 2px 0;line-height:16px;"></span></div>
<div class="a" style="left:103px;top:260px;width:123px;height:8px;background:#fffee4;border-radius:4px"></div>
<div class="a" style="left:101px;top:258px;width:2px;height:1px;background:#7a8aa8"></div>
<div class="a" style="left:373px;top:258px;width:2px;height:1px;background:#7a8aa8"></div>
<div class="a" style="left:978px;top:233px;width:15px;height:36px;background:#fdf9c6"></div>
<div class="a" style="left:978px;top:270px;width:15px;height:318px;background:#fff"></div>
<div class="a" style="left:978px;top:236px;width:11px;height:11px;background:#fff;border:1px solid #a8a8a8;border-right-color:#b8b8b8;border-bottom-color:#b8b8b8;box-shadow:1px 1px 0 #e4e8f0"></div>
<svg class="a" style="left:978px;top:252px" width="15" height="18"><path d="M0 0.5h15M0 17.5h15" stroke="#10107a" stroke-dasharray="2 1"/></svg>
<div class="a" style="left:978px;top:255px;width:12px;height:12px;background:#fff;border:1px solid #ababab;border-right-color:#e2e6ee;border-bottom-color:#e2e6ee"></div>
<svg class="a" style="left:978px;top:255px" width="12" height="12"><path d="M2.3 4l2.3 3.8 3.9-5.6" stroke="#000" stroke-width="2" fill="none"/></svg>
<div class="a" style="left:978px;top:273px;width:11px;height:11px;background:#e8ecf4;border:1px solid #b8b8b8;border-right-color:#c8c8c8;border-bottom-color:#c8c8c8"></div>
<div class="a" style="left:978px;top:292px;width:11px;height:11px;background:#e8ecf4;border:1px solid #b8b8b8;border-right-color:#c8c8c8;border-bottom-color:#c8c8c8"></div>
<div class="a" style="left:978px;top:310px;width:11px;height:11px;background:#e8ecf4;border:1px solid #b8b8b8;border-right-color:#c8c8c8;border-bottom-color:#c8c8c8"></div>
<div class="a" style="left:978px;top:329px;width:11px;height:11px;background:#e8ecf4;border:1px solid #b8b8b8;border-right-color:#c8c8c8;border-bottom-color:#c8c8c8"></div>
<div class="a" style="left:978px;top:348px;width:11px;height:11px;background:#e8ecf4;border:1px solid #b8b8b8;border-right-color:#c8c8c8;border-bottom-color:#c8c8c8"></div>
<div class="a" style="left:978px;top:366px;width:11px;height:11px;background:#e8ecf4;border:1px solid #b8b8b8;border-right-color:#c8c8c8;border-bottom-color:#c8c8c8"></div>
<div class="a" style="left:978px;top:385px;width:11px;height:11px;background:#e8ecf4;border:1px solid #b8b8b8;border-right-color:#c8c8c8;border-bottom-color:#c8c8c8"></div>
<div class="a" style="left:978px;top:404px;width:11px;height:11px;background:#e8ecf4;border:1px solid #b8b8b8;border-right-color:#c8c8c8;border-bottom-color:#c8c8c8"></div>
<div class="a" style="left:978px;top:423px;width:11px;height:11px;background:#e8ecf4;border:1px solid #b8b8b8;border-right-color:#c8c8c8;border-bottom-color:#c8c8c8"></div>
<div class="a" style="left:978px;top:441px;width:11px;height:11px;background:#e8ecf4;border:1px solid #b8b8b8;border-right-color:#c8c8c8;border-bottom-color:#c8c8c8"></div>
<div class="a" style="left:978px;top:460px;width:11px;height:11px;background:#e8ecf4;border:1px solid #b8b8b8;border-right-color:#c8c8c8;border-bottom-color:#c8c8c8"></div>
<div class="a" style="left:978px;top:479px;width:11px;height:11px;background:#e8ecf4;border:1px solid #b8b8b8;border-right-color:#c8c8c8;border-bottom-color:#c8c8c8"></div>
<div class="a" style="left:978px;top:497px;width:11px;height:11px;background:#e8ecf4;border:1px solid #b8b8b8;border-right-color:#c8c8c8;border-bottom-color:#c8c8c8"></div>
<div class="a" style="left:978px;top:516px;width:11px;height:11px;background:#e8ecf4;border:1px solid #b8b8b8;border-right-color:#c8c8c8;border-bottom-color:#c8c8c8"></div>
<div class="a" style="left:978px;top:535px;width:11px;height:11px;background:#e8ecf4;border:1px solid #b8b8b8;border-right-color:#c8c8c8;border-bottom-color:#c8c8c8"></div>
<div class="a" style="left:978px;top:554px;width:11px;height:11px;background:#e8ecf4;border:1px solid #b8b8b8;border-right-color:#c8c8c8;border-bottom-color:#c8c8c8"></div>
<div class="a" style="left:978px;top:572px;width:11px;height:11px;background:#e8ecf4;border:1px solid #b8b8b8;border-right-color:#c8c8c8;border-bottom-color:#c8c8c8"></div>
<div class="a" style="left:23px;top:252px;width:14px;height:336px;background:#e8ecf4;border:1px solid #d0dcee;border-left-color:#fff;border-radius:7px"></div>
<div class="a" style="left:26px;top:258px;width:0;height:0;border-left:4px solid transparent;border-right:4px solid transparent;border-bottom:4px solid #6a6a80"></div>
<div class="a" style="left:24px;top:266px;width:12px;height:1px;background:#60607a"></div>
<div class="a" style="left:24px;top:573px;width:12px;height:1px;background:#9aa8c0"></div>
<div class="a" style="left:26px;top:578px;width:0;height:0;border-left:4px solid transparent;border-right:4px solid transparent;border-top:4px solid #6a6a80"></div>
<svg class="a" style="left:32px;top:370px" width="3" height="3"><path d="M2 0h1v1H2zM1 1h1v1H1zM0 2h1v1H0z" fill="#8096b8"/></svg><svg class="a" style="left:32px;top:378px" width="3" height="3"><path d="M2 0h1v1H2zM1 1h1v1H1zM0 2h1v1H0z" fill="#8096b8"/></svg><svg class="a" style="left:32px;top:386px" width="3" height="3"><path d="M2 0h1v1H2zM1 1h1v1H1zM0 2h1v1H0z" fill="#8096b8"/></svg><svg class="a" style="left:32px;top:394px" width="3" height="3"><path d="M2 0h1v1H2zM1 1h1v1H1zM0 2h1v1H0z" fill="#8096b8"/></svg><svg class="a" style="left:32px;top:402px" width="3" height="3"><path d="M2 0h1v1H2zM1 1h1v1H1zM0 2h1v1H0z" fill="#8096b8"/></svg><svg class="a" style="left:32px;top:410px" width="3" height="3"><path d="M2 0h1v1H2zM1 1h1v1H1zM0 2h1v1H0z" fill="#8096b8"/></svg><svg class="a" style="left:32px;top:418px" width="3" height="3"><path d="M2 0h1v1H2zM1 1h1v1H1zM0 2h1v1H0z" fill="#8096b8"/></svg><svg class="a" style="left:32px;top:426px" width="3" height="3"><path d="M2 0h1v1H2zM1 1h1v1H1zM0 2h1v1H0z" fill="#8096b8"/></svg><svg class="a" style="left:32px;top:434px" width="3" height="3"><path d="M2 0h1v1H2zM1 1h1v1H1zM0 2h1v1H0z" fill="#8096b8"/></svg><svg class="a" style="left:32px;top:442px" width="3" height="3"><path d="M2 0h1v1H2zM1 1h1v1H1zM0 2h1v1H0z" fill="#8096b8"/></svg><svg class="a" style="left:32px;top:450px" width="3" height="3"><path d="M2 0h1v1H2zM1 1h1v1H1zM0 2h1v1H0z" fill="#8096b8"/></svg><svg class="a" style="left:27px;top:374px" width="3" height="3"><path d="M2 0h1v1H2zM1 1h1v1H1zM0 2h1v1H0z" fill="#8096b8"/></svg><svg class="a" style="left:27px;top:382px" width="3" height="3"><path d="M2 0h1v1H2zM1 1h1v1H1zM0 2h1v1H0z" fill="#8096b8"/></svg><svg class="a" style="left:27px;top:390px" width="3" height="3"><path d="M2 0h1v1H2zM1 1h1v1H1zM0 2h1v1H0z" fill="#8096b8"/></svg><svg class="a" style="left:27px;top:398px" width="3" height="3"><path d="M2 0h1v1H2zM1 1h1v1H1zM0 2h1v1H0z" fill="#8096b8"/></svg><svg class="a" style="left:27px;top:406px" width="3" height="3"><path d="M2 0h1v1H2zM1 1h1v1H1zM0 2h1v1H0z" fill="#8096b8"/></svg><svg class="a" style="left:27px;top:414px" width="3" height="3"><path d="M2 0h1v1H2zM1 1h1v1H1zM0 2h1v1H0z" fill="#8096b8"/></svg><svg class="a" style="left:27px;top:422px" width="3" height="3"><path d="M2 0h1v1H2zM1 1h1v1H1zM0 2h1v1H0z" fill="#8096b8"/></svg><svg class="a" style="left:27px;top:430px" width="3" height="3"><path d="M2 0h1v1H2zM1 1h1v1H1zM0 2h1v1H0z" fill="#8096b8"/></svg><svg class="a" style="left:27px;top:438px" width="3" height="3"><path d="M2 0h1v1H2zM1 1h1v1H1zM0 2h1v1H0z" fill="#8096b8"/></svg><svg class="a" style="left:27px;top:446px" width="3" height="3"><path d="M2 0h1v1H2zM1 1h1v1H1zM0 2h1v1H0z" fill="#8096b8"/></svg>
<div class="l" style="left:9px;top:593px;font-size:11px;color:#111">ome Do Responsavel</div>
<div class="f" style="left:114px;top:590px;width:46px;height:17px;background:#ffffcc;"><span style="text-align:center;color:#8898b0;font-weight:bold;font-size:11px;padding:1px 2px 0;line-height:16px;">142961</span></div>
<div class="f" style="left:164px;top:590px;width:187px;height:17px;background:#ffffcc;"><span style="text-align:center;color:#111;font-weight:normal;font-size:11px;padding:1px 2px 0;line-height:16px;"></span></div>
<div class="l" style="right:613px;top:594px;font-size:11px;color:#111;font-weight:normal;">Previsao</div>
<div class="f" style="left:420px;top:590px;width:59px;height:17px;background:#ffffcc;"><span style="text-align:center;color:#8898b0;font-weight:bold;font-size:11px;padding:1px 1px 0;line-height:16px;">20/11/2007</span></div>
<div class="f" style="left:838px;top:589px;width:67px;height:17px;background:#ffffcc;"><span style="text-align:right;color:#17177a;font-weight:bold;font-size:11px;padding:1px 0px 0;line-height:16px;">1,160.00</span></div>
<div class="f" style="left:908px;top:589px;width:67px;height:17px;background:#ffffcc;"><span style="text-align:right;color:#17177a;font-weight:bold;font-size:11px;padding:1px 0px 0;line-height:16px;">1,160.00</span></div>
<div class="a" style="left:930px;top:616px;width:1px;height:13px;background:#7f94b4"></div>
<div class="a" style="left:991px;top:616px;width:1px;height:13px;background:#7f94b4"></div>
<div class="l" style="left:930px;width:62px;text-align:center;top:617px;font-size:11px;color:#111;letter-spacing:0">Alterar</div>
<div class="tab" style="left:6px;width:125px">Titulos Fornecedores</div>
<div class="tab" style="left:134px;width:122px;padding-left:3px">Consulta Titulos</div>
<div class="tab" style="left:259px;width:121px;text-align:left;padding-left:7px">Inclusao De Instrucoes</div>
<div class="tab" style="left:383px;top:656px;height:22px;line-height:22px;width:124px;background:#94b4d8;border:1px solid #7c98bc;border-top:none;color:#111">Alterar Titulos</div>
<div class="a" style="left:0;top:677px;width:3px;height:10px;background:#fff"></div>
<div class="a" style="left:3px;top:681px;width:1027px;height:6px;background:#e8ecf4"></div>
<div class="a" style="left:1022px;top:111px;width:8px;height:570px;background:#fff"></div>
<div class="a" style="left:376px;top:647px;width:139px;height:38px;border:5px solid #f00;border-radius:3px"></div>
<div class="a" style="left:921px;top:612px;width:82px;height:21px;border:5px solid #f00;border-radius:3px"></div>
</body></html>
